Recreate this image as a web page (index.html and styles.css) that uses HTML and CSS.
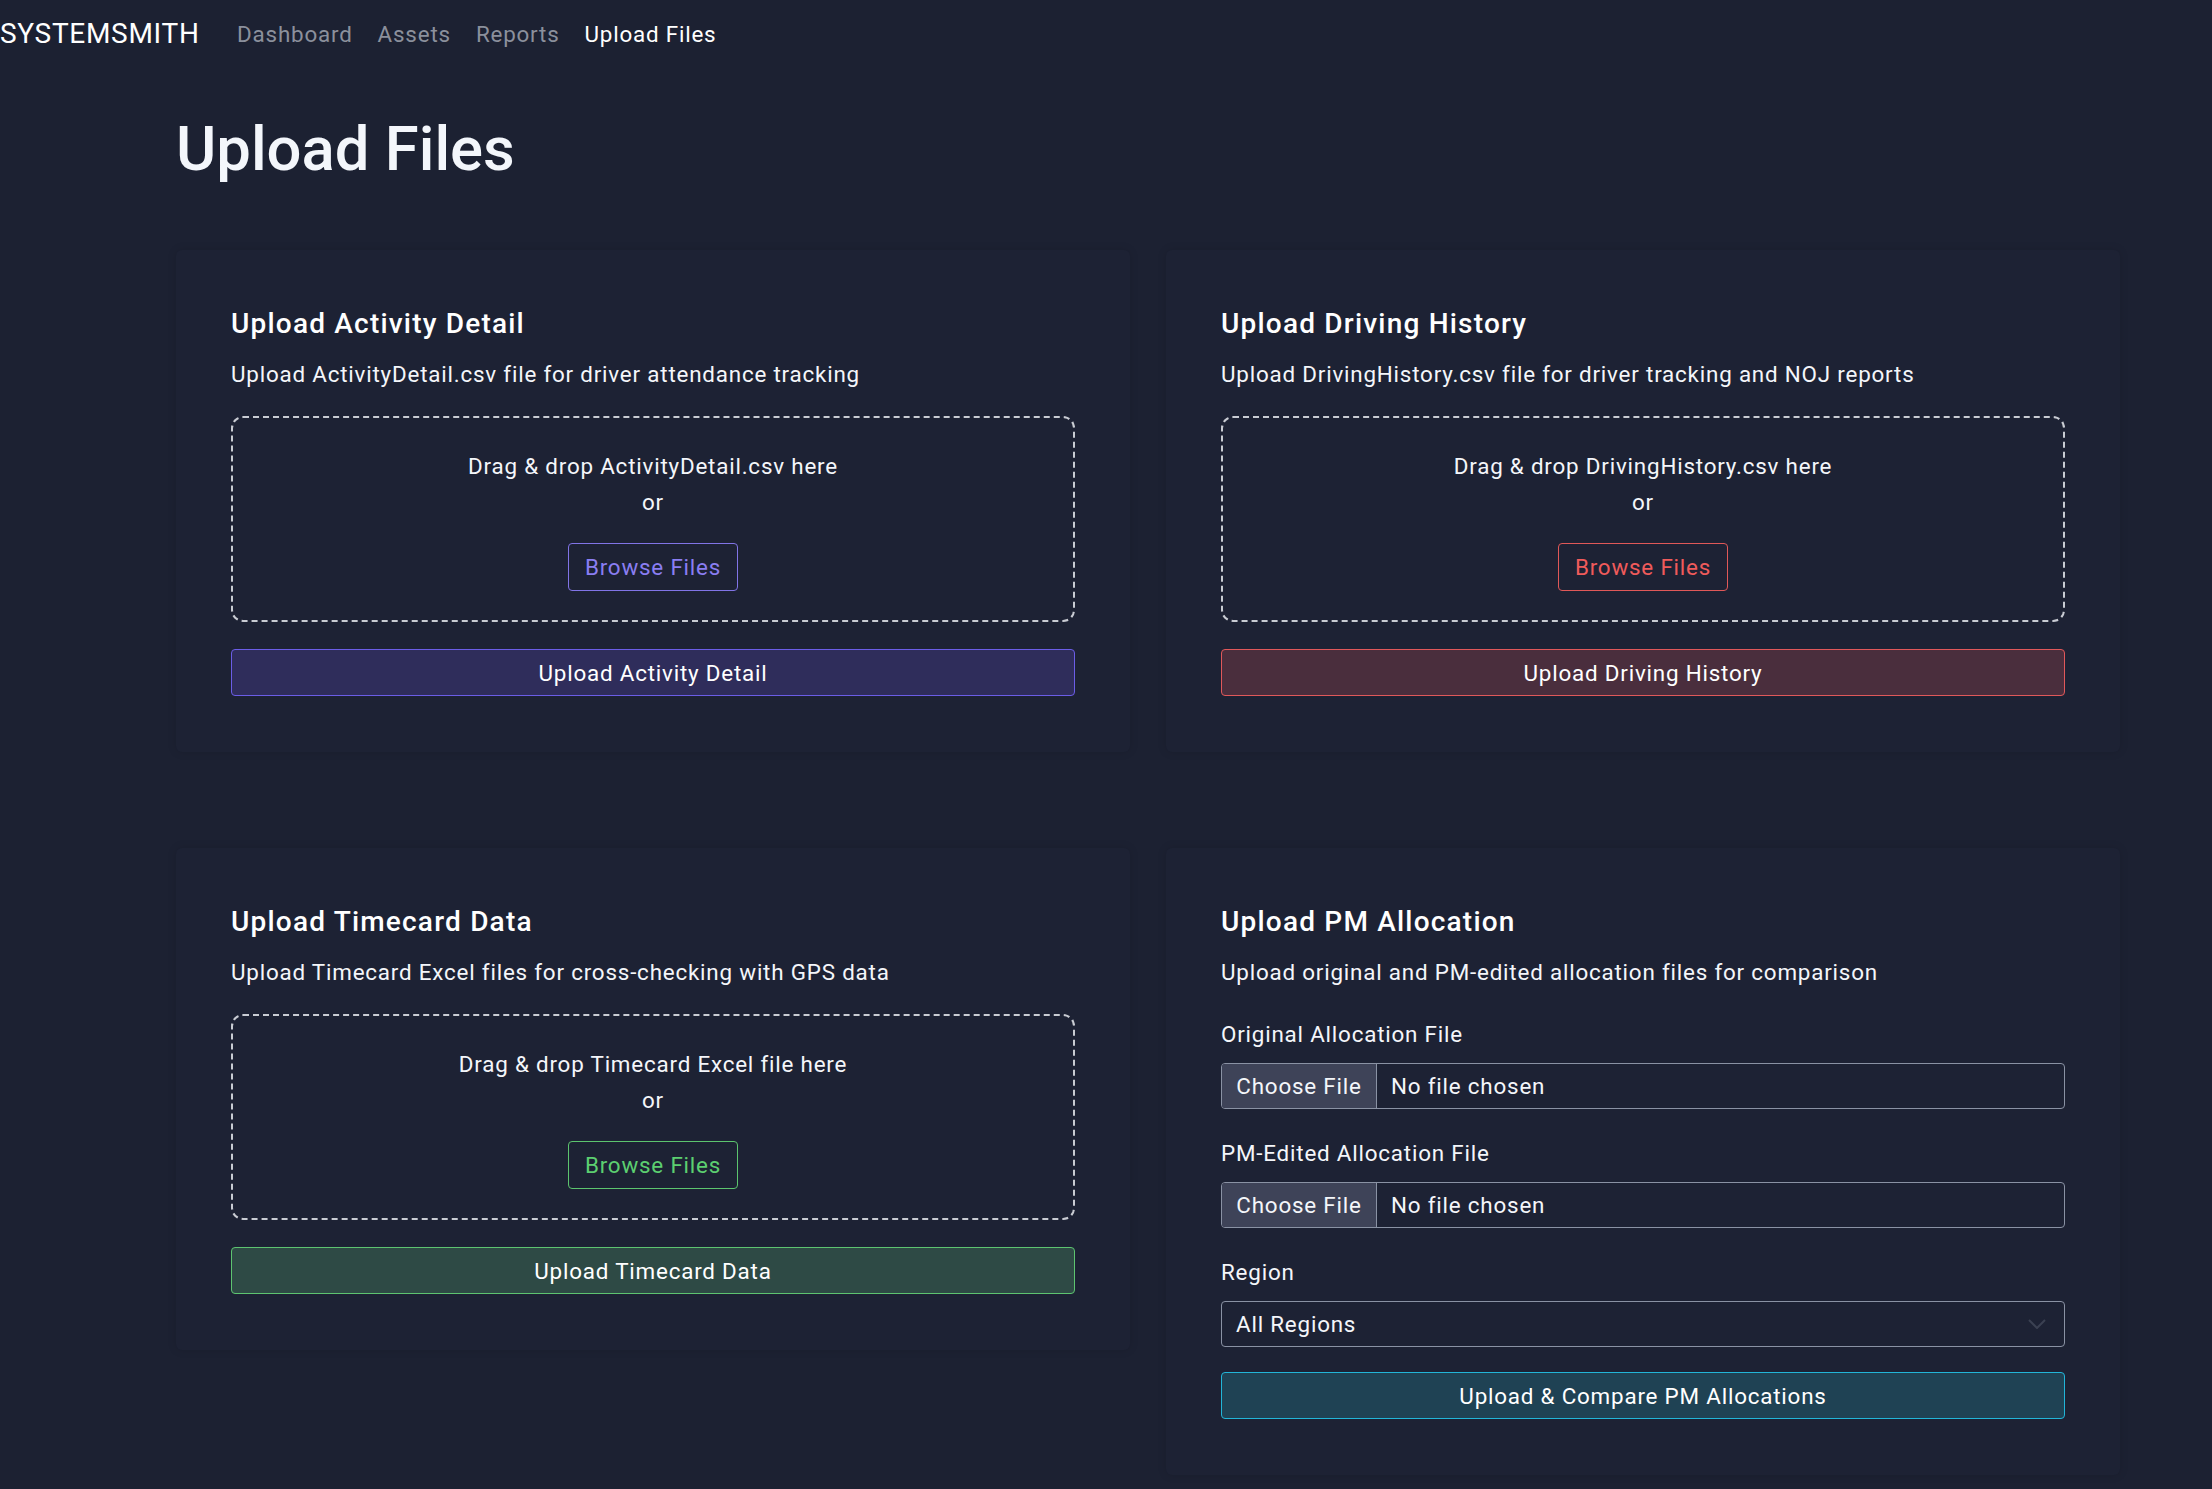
FILE: index.html
```html
<!DOCTYPE html>
<html lang="en">
<head>
<meta charset="utf-8">
<title>Upload Files</title>
<link rel="stylesheet" href="styles.css">
</head>
<body>
<nav class="topnav">
  <span class="brand">SYSTEMSMITH</span>
  <a class="nav-link">Dashboard</a>
  <a class="nav-link">Assets</a>
  <a class="nav-link">Reports</a>
  <a class="nav-link active">Upload Files</a>
</nav>
<main class="page">
  <h1 class="page-title">Upload Files</h1>
  <div class="card-grid">
    <section class="card">
      <h2 class="card-title">Upload Activity Detail</h2>
      <p class="card-desc">Upload ActivityDetail.csv file for driver attendance tracking</p>
      <div class="dropzone">
        <p class="dz-text">Drag &amp; drop ActivityDetail.csv here</p>
        <p class="dz-or">or</p>
        <button class="browse purple">Browse Files</button>
      </div>
      <button class="upload purple">Upload Activity Detail</button>
    </section>
    <section class="card">
      <h2 class="card-title">Upload Driving History</h2>
      <p class="card-desc">Upload DrivingHistory.csv file for driver tracking and NOJ reports</p>
      <div class="dropzone">
        <p class="dz-text">Drag &amp; drop DrivingHistory.csv here</p>
        <p class="dz-or">or</p>
        <button class="browse red">Browse Files</button>
      </div>
      <button class="upload red">Upload Driving History</button>
    </section>
    <section class="card">
      <h2 class="card-title">Upload Timecard Data</h2>
      <p class="card-desc">Upload Timecard Excel files for cross-checking with GPS data</p>
      <div class="dropzone">
        <p class="dz-text">Drag &amp; drop Timecard Excel file here</p>
        <p class="dz-or">or</p>
        <button class="browse green">Browse Files</button>
      </div>
      <button class="upload green">Upload Timecard Data</button>
    </section>
    <section class="card">
      <h2 class="card-title">Upload PM Allocation</h2>
      <p class="card-desc">Upload original and PM-edited allocation files for comparison</p>
      <div class="field first">
        <label class="field-label">Original Allocation File</label>
        <div class="file-input"><span class="file-btn">Choose File</span><span class="file-name">No file chosen</span></div>
      </div>
      <div class="field">
        <label class="field-label">PM-Edited Allocation File</label>
        <div class="file-input"><span class="file-btn">Choose File</span><span class="file-name">No file chosen</span></div>
      </div>
      <div class="field">
        <label class="field-label">Region</label>
        <div class="select"><span>All Regions</span>
          <svg class="chev" width="18" height="10" viewBox="0 0 18 10"><path d="M1 1 L9 9 L17 1" fill="none" stroke="#3b4152" stroke-width="2"/></svg>
        </div>
      </div>
      <button class="upload teal">Upload &amp; Compare PM Allocations</button>
    </section>
  </div>
</main>
</body>
</html>
```

FILE: styles.css
```css
* { box-sizing: border-box; }
html, body { margin: 0; padding: 0; }
body {
  background: #1c2132;
  color: #f4f6fa;
  font-family: Roboto, "Noto Sans", "Liberation Sans", sans-serif;
  font-size: 22.4px;
  line-height: 34px;
  letter-spacing: 0.8px;
  height: 1489px;
  overflow: hidden;
}
.topnav {
  display: flex;
  align-items: center;
  height: 68px;
}
.brand {
  font-size: 28px;
  color: #ffffff;
  margin-right: 25px;
  letter-spacing: 0.7px;
}
.nav-link {
  color: #8b909c;
  padding: 0 12.5px;
  font-size: 22.4px;
}
.nav-link.active { color: #ffffff; }
.page {
  width: 1944px;
  margin-left: 176px;
}
.page-title {
  margin: 44px 0 0 0;
  font-size: 61.6px;
  line-height: 74px;
  font-weight: 500;
  letter-spacing: 0;
  color: #f3f6fb;
}
.card-grid {
  display: grid;
  grid-template-columns: 954px 954px;
  column-gap: 36px;
  row-gap: 96px;
  align-items: start;
  margin-top: 64px;
}
.card {
  background: #1d2234;
  box-shadow: 0 0 10px rgba(0, 0, 0, 0.12);
  padding: 57px 55px 56px;
  border-radius: 6px;
}
.card-title {
  margin: 0;
  font-size: 28px;
  line-height: 34px;
  font-weight: 500;
  letter-spacing: 1.2px;
  color: #ffffff;
}
.card-desc {
  margin: 16px 0 0 0;
  color: #f4f6fa;
}
.dropzone {
  margin-top: 25px;
  border: 2px dashed #c9ccd3;
  border-radius: 12px;
  padding: 31px 0 29px;
  display: flex;
  flex-direction: column;
  align-items: center;
  text-align: center;
}
.dz-text { margin: 0; }
.dz-or { margin: 2px 0 0 0; }
.browse {
  margin-top: 24px;
  height: 48px;
  padding: 0 16px;
  background: transparent;
  border: 1px solid;
  border-radius: 4px;
  font-family: inherit;
  font-size: 22.4px;
  letter-spacing: 0.8px;
}
.upload {
  display: block;
  width: 100%;
  height: 47px;
  margin-top: 27px;
  border: 1.5px solid;
  border-radius: 4px;
  font-family: inherit;
  font-size: 22.4px;
  letter-spacing: 0.8px;
  color: #ffffff;
}
.browse.purple { color: #8a7ef2; border-color: #8174e6; }
.browse.red { color: #f05b5b; border-color: #e05858; }
.browse.green { color: #5ccf70; border-color: #5cc46e; }
.upload.purple { background: #2f2d5b; border-color: #6b5de6; }
.upload.red { background: #4a2e3d; border-color: #e0585a; }
.upload.green { background: #2e4a45; border-color: #5dc470; }
.upload.teal { background: #1f4254; border-color: #22b5d8; margin-top: 25px; }
.field { margin-top: 27px; }
.field.first { margin-top: 28px; }
.field-label { display: block; }
.file-input, .select {
  margin-top: 12px;
  height: 46px;
  border: 1px solid #8a92a4;
  border-radius: 4px;
  display: flex;
  align-items: center;
  overflow: hidden;
}
.file-btn {
  background: #3e4358;
  height: 100%;
  width: 155px;
  display: flex;
  align-items: center;
  justify-content: center;
  border-right: 1px solid #8a92a4;
}
.file-name { padding-left: 14px; }
.select {
  justify-content: space-between;
  padding: 0 18px 0 14px;
}
```
